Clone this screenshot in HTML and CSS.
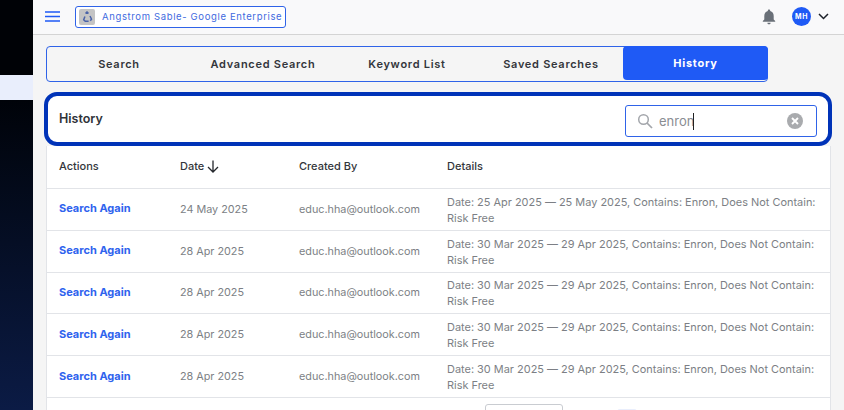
FILE: index.html
```html
<!DOCTYPE html>
<html lang="en">
<head>
<meta charset="utf-8">
<title>History</title>
<link rel="stylesheet" href="styles.css">
</head>
<body>
<div class="app">
  <aside class="sidebar">
    <div class="side-top"></div>
    <div class="side-active"></div>
    <div class="side-rest"></div>
  </aside>
  <div class="main">
    <header class="topbar">
      <svg class="menu" width="15" height="11" viewBox="0 0 15 11"><path d="M0 1h15M0 5.500h15M0 10h15" stroke="#1f5af5" stroke-width="1.600"/></svg>
      <div class="org">
        <span class="org-logo"><svg width="12" height="12" viewBox="0 0 12 12"><path d="M4.500 2.600L6 1l1.500 1.600M9 5l1.500 3.200-1.200 1.600M7.600 10.300H4.300L2.700 8.800 3.900 5.400" fill="none" stroke="#4a63a8" stroke-width="1.500"/></svg></span>
        <span class="org-name">Angstrom Sable- Google Enterprise</span>
      </div>
      <svg class="bell" width="14" height="16" viewBox="0 0 14 16"><path fill="#6a7078" d="M7 0.500c-.7 0-1.200.5-1.200 1.200v.4C3.500 2.700 2.300 4.600 2.300 7v3.400L.8 12v.8h12.400V12l-1.500-1.600V7c0-2.400-1.200-4.300-3.500-4.900v-.4C8.200 1 7.700.5 7 .5zM5.400 13.700c0 .9.700 1.600 1.600 1.600s1.600-.7 1.600-1.600z"/></svg>
      <span class="avatar">MH</span>
      <svg class="caret" width="11" height="7" viewBox="0 0 11 7"><path d="M1 1l4.500 4.500L10 1" fill="none" stroke="#1d2129" stroke-width="1.500"/></svg>
    </header>
    <div class="content">
      <nav class="tabs">
        <span class="tab">Search</span>
        <span class="tab">Advanced Search</span>
        <span class="tab">Keyword List</span>
        <span class="tab">Saved Searches</span>
        <span class="tab tab-active">History</span>
      </nav>
      <section class="head-card">
        <h1 class="head-title">History</h1>
        <div class="search">
          <svg width="16" height="16" viewBox="0 0 16 16"><circle cx="6.500" cy="6.500" r="4.800" fill="none" stroke="#a3a6ab" stroke-width="1.500"/><path d="M10 10l5 5" stroke="#a3a6ab" stroke-width="1.700"/></svg>
          <span class="search-text">enron</span><span class="cursor"></span>
          <svg class="clear" width="16" height="16" viewBox="0 0 16 16"><circle cx="8" cy="8" r="8" fill="#a9abae"/><path d="M5 5l6 6M11 5l-6 6" stroke="#fff" stroke-width="1.900"/></svg>
        </div>
      </section>
      <div class="table">
        <div class="row row-head">
          <span class="c-actions">Actions</span>
          <span class="c-date c-sort">Date <svg width="12" height="13" viewBox="0 0 12 13"><path d="M6 .5v11.500M1 7l5 5 5-5" fill="none" stroke="#24272c" stroke-width="1.300"/></svg></span>
          <span class="c-by">Created By</span>
          <span class="c-details">Details</span>
        </div>
        <div class="row">
          <a class="c-actions link">Search Again</a>
          <span class="c-date">24 May 2025</span>
          <span class="c-by">educ.hha@outlook.com</span>
          <span class="c-details">Date: 25 Apr 2025 — 25 May 2025, Contains: Enron, Does Not Contain: Risk Free</span>
        </div>
        <div class="row">
          <a class="c-actions link">Search Again</a>
          <span class="c-date">28 Apr 2025</span>
          <span class="c-by">educ.hha@outlook.com</span>
          <span class="c-details">Date: 30 Mar 2025 — 29 Apr 2025, Contains: Enron, Does Not Contain: Risk Free</span>
        </div>
        <div class="row">
          <a class="c-actions link">Search Again</a>
          <span class="c-date">28 Apr 2025</span>
          <span class="c-by">educ.hha@outlook.com</span>
          <span class="c-details">Date: 30 Mar 2025 — 29 Apr 2025, Contains: Enron, Does Not Contain: Risk Free</span>
        </div>
        <div class="row">
          <a class="c-actions link">Search Again</a>
          <span class="c-date">28 Apr 2025</span>
          <span class="c-by">educ.hha@outlook.com</span>
          <span class="c-details">Date: 30 Mar 2025 — 29 Apr 2025, Contains: Enron, Does Not Contain: Risk Free</span>
        </div>
        <div class="row">
          <a class="c-actions link">Search Again</a>
          <span class="c-date">28 Apr 2025</span>
          <span class="c-by">educ.hha@outlook.com</span>
          <span class="c-details">Date: 30 Mar 2025 — 29 Apr 2025, Contains: Enron, Does Not Contain: Risk Free</span>
        </div>
        <div class="pager">
          <span class="page-select"></span>
          <span class="page-current"></span>
        </div>
      </div>
    </div>
  </div>
</div>
</body>
</html>
```
FILE: styles.css
```css
* { box-sizing: border-box; }
html, body { margin: 0; height: 100%; overflow: hidden; }
body { font-family: Inter, "Liberation Sans", sans-serif; background: #f5f5f5; }
.app { display: flex; height: 410px; width: 844px; overflow: hidden; }
.sidebar { width: 33px; flex: none; display: flex; flex-direction: column; background: #000; }
.side-top { height: 75px; background: #000206; }
.side-active { height: 25px; background: #e9eefc; }
.side-rest { flex: 1; background: linear-gradient(180deg, #000309 0%, #0b1b45 100%); }
.main { flex: 1; min-width: 0; display: flex; flex-direction: column; }
.topbar { height: 35px; flex: none; display: flex; align-items: center; padding: 0 15px 1px 12px; background: #f9f9fa; border-bottom: 1px solid #d4d4d4; }
.menu { flex: none; }
.org { margin-left: 15px; width: 211px; height: 22px; display: flex; align-items: center; gap: 7px; padding-left: 3px; border: 1px solid #2f63e8; border-radius: 3px; background: #fff; }
.org-logo { flex: none; width: 16px; height: 16px; display: flex; align-items: center; justify-content: center; background: #c4c4c4; border-radius: 2px; }
.org-name { font-size: 9.500px; letter-spacing: .64px; color: #3f6be0; white-space: nowrap; }
.bell { margin-left: auto; }
.avatar { margin-left: 16px; width: 19px; height: 19px; border-radius: 50%; background: #1f5af5; color: #fff; font-size: 7px; font-weight: 700; letter-spacing: .5px; display: flex; align-items: center; justify-content: center; }
.caret { margin-left: 7px; }
.content { flex: 1; padding: 11px 12px 0 11px; display: flex; flex-direction: column; min-height: 0; }
.tabs { margin-left: 2px; width: 722px; height: 36px; flex: none; display: grid; grid-template-columns: repeat(5, 144px); border: 1px solid #2f63e8; border-radius: 4px; }
.tab { display: flex; align-items: center; justify-content: center; font-size: 11px; font-weight: 600; letter-spacing: .72px; color: #33363b; }
.tab-active { background: #1f5af5; color: #fff; border-radius: 4px; margin: -1px -1px 1px 0; font-weight: 700; }
.head-card { margin-top: 10px; height: 54px; flex: none; display: flex; align-items: center; justify-content: space-between; padding: 0 11px 0 11px; background: #fff; border: 4px solid #0033b8; border-radius: 13px; }
.head-title { margin: 0 0 2px; font-size: 12.500px; font-weight: 600; color: #303339; }
.search { width: 192px; height: 32px; margin-top: 4px; display: flex; align-items: center; padding: 0 13px 0 11px; border: 1px solid #2f63e8; border-radius: 3px; background: #fff; }
.search-text { margin-left: 6px; font-size: 13px; color: #8a8d92; }
.cursor { width: 1px; height: 17px; margin-left: -1px; background: #222; }
.clear { margin-left: auto; }
.table { margin: 0 1px 0 2px; flex: 1; background: #fff; border-left: 1px solid #e2e4e8; border-right: 1px solid #e2e4e8; min-height: 0; overflow: hidden; }
.row { display: grid; grid-template-columns: 121px 119px 148px 1fr; align-items: center; padding: 0 10px 0 12px; height: 41.800px; border-bottom: 1px solid #e2e4e8; font-size: 10.800px; color: #7c7f85; }
.row-head { height: 43px; padding-bottom: 2px; color: #33363b; font-size: 11px; font-weight: 500; }
.c-sort { display: flex; align-items: center; gap: 3px; }
.c-details { font-size: 10.950px; line-height: 16px; padding-top: 1px; }
.row-head .c-details { padding-top: 0; font-size: 11px; }
.link { color: #2f63ee; font-weight: 700; font-size: 11px; line-height: 13px; padding-bottom: 1px; }
.pager { position: relative; height: 20px; }
.page-select { position: absolute; left: 438px; top: 6px; width: 78px; height: 20px; border: 1px solid #c9ccd1; border-radius: 3px; }
.page-current { position: absolute; left: 570px; top: 11px; width: 20px; height: 12px; background: #e9eefc; border-radius: 3px; }
```
